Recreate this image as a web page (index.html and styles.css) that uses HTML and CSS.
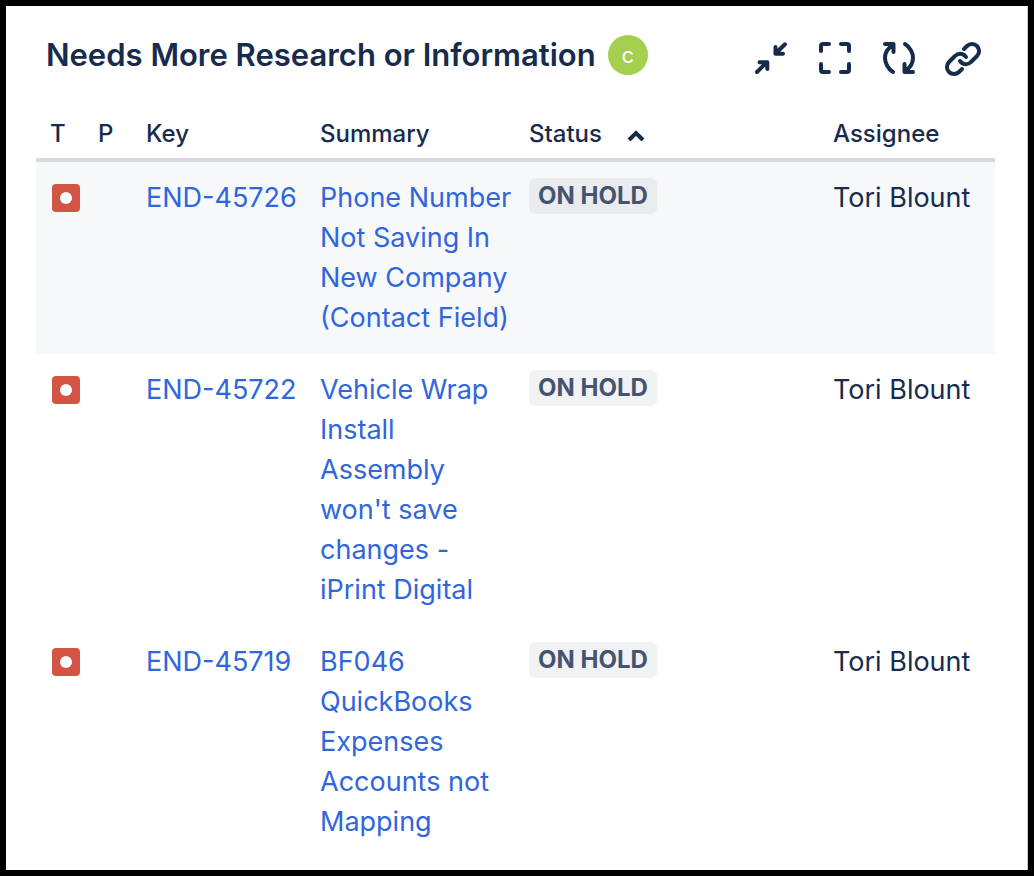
FILE: index.html
```html
<!DOCTYPE html>
<html lang="en">
<head>
    <meta charset="UTF-8">
    <meta name="viewport" content="width=device-width, initial-scale=1.0">
    <title>Needs More Research or Information</title>
    <link rel="stylesheet" href="styles.css">
</head>
<body>
    <main class="gadget">
        <header class="gadget-header">
            <h1>Needs More Research or Information</h1>
            <span class="avatar">c</span>
            <div class="actions">
                <button type="button" aria-label="Minimize">
                    <svg viewBox="0 0 36 36"><path d="M32 4.300 22.500 13.500M22.500 7v6.700H30M4 32l9.500-9.500M6.500 22.200h7.800V29"/><path class="solid" d="M22 8v6h7zM14 28v-6H7z"/></svg>
                </button>
                <button type="button" aria-label="Maximize">
                    <svg viewBox="0 0 36 36"><path d="M4 11V6q0-2 2-2h6M24 4h6q2 0 2 2v5M32 24v6q0 2-2 2h-6M12 32H6q-2 0-2-2v-6"/></svg>
                </button>
                <button type="button" aria-label="Refresh">
                    <svg viewBox="0 0 36 36"><path d="M4 4h8.500v8M12 5C7 8 4 13 4 18s3 11 8 14M32 32h-8.500v-8M24 31c5-3 8-8 8-13S29 7 24 4"/></svg>
                </button>
                <button type="button" aria-label="Copy link">
                    <svg viewBox="0 0 36 36"><path d="M19 9l3-3a7 7 0 0 1 10 10l-6 6a7 7 0 0 1-11-1M17 29l-3 3a7 7 0 0 1-10-10l6-6a7 7 0 0 1 11 1"/></svg>
                </button>
            </div>
        </header>
        <table class="issues">
            <thead>
                <tr>
                    <th class="type">T</th>
                    <th class="priority">P</th>
                    <th class="key">Key</th>
                    <th class="summary">Summary</th>
                    <th class="status" aria-sort="ascending">Status<svg class="sort" viewBox="0 0 18 12"><path d="M2 10l7-7 7 7"/></svg></th>
                    <th class="assignee">Assignee</th>
                </tr>
            </thead>
            <tbody>
                <tr class="focused">
                    <td class="type"><span class="bug" role="img" aria-label="Bug"></span></td>
                    <td></td>
                    <td><a href="#END-45726">END-45726</a></td>
                    <td><a href="#END-45726">Phone Number Not Saving In New Company (Contact Field)</a></td>
                    <td><span class="lozenge">ON HOLD</span></td>
                    <td>Tori Blount</td>
                </tr>
                <tr>
                    <td class="type"><span class="bug" role="img" aria-label="Bug"></span></td>
                    <td></td>
                    <td><a href="#END-45722">END-45722</a></td>
                    <td><a href="#END-45722">Vehicle Wrap Install Assembly won't save changes - iPrint Digital</a></td>
                    <td><span class="lozenge">ON HOLD</span></td>
                    <td>Tori Blount</td>
                </tr>
                <tr>
                    <td class="type"><span class="bug" role="img" aria-label="Bug"></span></td>
                    <td></td>
                    <td><a href="#END-45719">END-45719</a></td>
                    <td><a href="#END-45719">BF046 QuickBooks Expenses Accounts not Mapping</a></td>
                    <td><span class="lozenge">ON HOLD</span></td>
                    <td>Tori Blount</td>
                </tr>
            </tbody>
        </table>
    </main>
</body>
</html>
```
FILE: styles.css
```css
* {
    box-sizing: border-box;
}
body {
    margin: 0;
    padding: 6px;
    background-color: #000;
    color: #172b4d;
    font-family: Inter, "Liberation Sans", sans-serif;
    font-size: 27px;
    line-height: 40px;
}
.gadget {
    min-height: calc(100vh - 12px);
    padding: 20px 32px 12px 30px;
    background-color: #fff;
    border-right: 1px solid #ccc;
}
.gadget-header {
    display: flex;
    align-items: flex-start;
    height: 64px;
    margin-bottom: 20px;
    padding-left: 10px;
}
.gadget-header h1 {
    margin: 0;
    font-size: 31px;
    font-weight: 600;
    line-height: 58px;
    white-space: nowrap;
}
.avatar {
    width: 40px;
    height: 40px;
    margin: 9px 0 0 12px;
    border-radius: 50%;
    background-color: #a5cf4f;
    color: #fff;
    font-size: 22px;
    text-align: center;
}
.actions {
    display: flex;
    margin-left: auto;
}
.actions button {
    width: 64px;
    height: 64px;
    padding: 14px;
    border: none;
    background: none;
    color: inherit;
    cursor: pointer;
}
.actions svg {
    display: block;
    width: 36px;
    height: 36px;
}
svg {
    fill: none;
    stroke: currentColor;
    stroke-width: 4;
    stroke-linecap: round;
    stroke-linejoin: round;
    overflow: visible;
}
.solid {
    fill: currentColor;
    stroke: none;
}
.issues {
    width: 100%;
    table-layout: fixed;
    border-collapse: collapse;
}
.issues th {
    padding: 8px 10px;
    border-bottom: 4px solid #d8dae2;
    font-size: 24px;
    font-weight: 500;
    line-height: 32px;
    text-align: left;
}
.issues td {
    padding: 16px 10px;
    vertical-align: top;
    white-space: nowrap;
}
.issues th.type {
    width: 52px;
    padding-left: 14px;
}
.issues td.type {
    padding-left: 16px;
}
.priority {
    width: 48px;
}
.key {
    width: 174px;
}
.summary {
    width: 209px;
}
.assignee {
    width: 172px;
}
.issues td:nth-child(4) {
    padding-right: 0;
    white-space: normal;
}
.focused {
    background-color: #f7f8fa;
}
.issues a {
    color: #2f66dc;
    text-decoration: none;
}
.issues a:hover {
    text-decoration: underline;
}
.sort {
    width: 18px;
    height: 12px;
    margin-left: 25px;
    stroke-linecap: butt;
    stroke-linejoin: miter;
}
.bug {
    display: flex;
    align-items: center;
    justify-content: center;
    width: 28px;
    height: 28px;
    margin: 6px 0;
    border-radius: 4px;
    background-color: #d25543;
}
.bug::before {
    content: "";
    width: 12px;
    height: 12px;
    border-radius: 50%;
    background-color: #fff;
}
.lozenge {
    display: block;
    width: fit-content;
    padding: 0 9px;
    border-radius: 6px;
    background-color: rgba(9, 30, 66, 0.06);
    color: #44546f;
    font-size: 24px;
    font-weight: 700;
    line-height: 36px;
}
```
